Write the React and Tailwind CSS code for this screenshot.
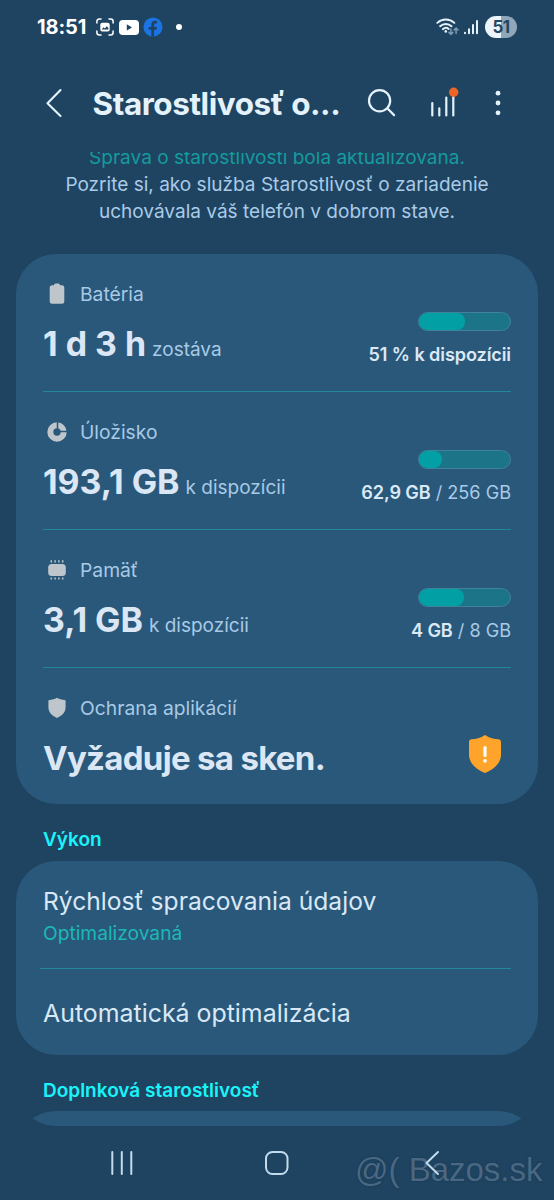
function StatusBar() {
    return (
        <div className="flex h-[54px] shrink-0 items-center justify-between pl-[37px] pr-[37px] text-white">
            <div className="flex items-center">
                <span className="w-[50px] text-[20px] font-bold leading-6 tracking-[-0.1px]">18:51</span>
                <svg width="18" height="18" viewBox="0 0 18 18" className="ml-[9px]" fill="none" stroke="#fff" strokeWidth="1.5" strokeLinecap="round">
                    <path d="M.9 5V3.4A2.5 2.5 0 0 1 3.4.9H5M13 .9h1.6a2.5 2.5 0 0 1 2.5 2.5V5M17.1 13v1.6a2.5 2.5 0 0 1-2.5 2.5H13M5 17.1H3.4A2.5 2.5 0 0 1 .9 14.6V13" />
                    <rect x="4.300" y="4.800" width="9.400" height="8.800" rx="2" fill="#fff" stroke="none" />
                    <path d="M5.600 11.600l2-2.300 1.200 1.200 2-2.200 1.600 1.700v1.600z" fill="#1f4461" stroke="none" />
                </svg>
                <svg width="20" height="15" viewBox="0 0 20 15" className="ml-[5px]">
                    <rect width="20" height="15" rx="3.8" fill="#fff" />
                    <path d="M7.800 4.300v6.200l5.200-3.100z" fill="#1f4461" />
                </svg>
                <svg width="20" height="20" viewBox="0 0 20 20" className="ml-[4px]">
                    <circle cx="10" cy="10" r="9.500" fill="#1c74e4" />
                    <path d="M8.300 19.400v-6.600H5.600v-2.900h2.700V7.800c0-2.800 1.500-4 3.800-4 .8 0 1.400.1 1.900.2v2.500h-1.300c-1.200 0-1.600.6-1.600 1.500v1.900h2.800l-.5 2.900h-2.300v6.600z" fill="#1f4461" />
                </svg>
                <span className="ml-[12.500px] h-[6px] w-[6px] rounded-full bg-white" />
            </div>
            <div className="flex items-center">
                <svg width="24" height="18" viewBox="0 0 24 18" fill="none" strokeLinecap="round">
                    <g stroke="#e6f2fa" strokeWidth="1.900">
                        <path d="M1.300 4.900a12.500 12.500 0 0 1 17 0M4.100 8.200a8.300 8.300 0 0 1 11.400 0M6.900 11.200a4.400 4.400 0 0 1 5.800-.2" />
                    </g>
                    <circle cx="9.800" cy="13.400" r="1.300" fill="#e6f2fa" />
                    <path d="M14.900 11v5.400m-2-2l2 2 2-2M20.100 15.400v-5.400m-2 2l2-2 2 2" stroke="#7d9bb3" strokeWidth="1.500" />
                </svg>
                <svg width="16" height="16" viewBox="0 0 16 16" className="ml-[2.500px]" stroke="#e6f2fa" strokeWidth="2" strokeLinecap="round">
                    <path d="M2 13.800v.4M6 10.200v4M10 6v8.200M14 2v12.200" />
                </svg>
                <span className="ml-[6.500px] flex h-[22px] w-[32px] items-center justify-center rounded-full bg-linear-to-r from-[#ebf5fb] from-50% to-[#8fa7b9] to-50% text-[17px] font-bold leading-none tracking-[-0.7px] text-[#24475f]">
                    51
                </span>
            </div>
        </div>
    );
}

function Header() {
    return (
        <header className="flex h-[98px] shrink-0 items-center pl-[44.500px] text-[#e3f2fb]">
            <svg width="18" height="30" viewBox="0 0 18 30" fill="none" stroke="currentColor" strokeWidth="2.100" strokeLinecap="round" strokeLinejoin="round">
                <path d="M15.500 2L2.500 15.300l13 12.700" />
            </svg>
            <h1 className="ml-[30px] mt-[2px] w-[260px] whitespace-nowrap text-[31.500px] font-bold leading-10 tracking-[-0.45px]">
                Starostlivosť o...
            </h1>
            <svg width="30" height="30" viewBox="0 0 30 30" className="ml-[14.500px]" fill="none" stroke="currentColor" strokeWidth="2.200" strokeLinecap="round">
                <circle cx="12.600" cy="12.800" r="10.600" />
                <path d="M20.500 20.500l6.600 6.600" />
            </svg>
            <svg width="32" height="32" viewBox="0 0 32 32" className="ml-[32px] -mt-[4px]" stroke="currentColor" strokeWidth="2.200" strokeLinecap="round">
                <path d="M3.300 18v12.500M10.300 23.300v7.200M17.300 12.500v18M24.300 9v21.500" />
                <circle cx="24.700" cy="7.300" r="4.700" fill="#ef6425" stroke="none" />
            </svg>
            <svg width="6" height="26" viewBox="0 0 6 26" className="ml-[34px]" fill="currentColor">
                <circle cx="3" cy="3.200" r="2.400" />
                <circle cx="3" cy="13" r="2.400" />
                <circle cx="3" cy="22.800" r="2.400" />
            </svg>
        </header>
    );
}

const BatteryIcon = () => (
    <svg width="26" height="22" viewBox="0 0 26 22" fill="#bec6cb">
        <path d="M10 2.200Q10 .5 11.500.5h3q1.500 0 1.500 1.700h1.800q2.500 0 2.500 2.500v13.600q0 2.500-2.500 2.500h-9.600q-2.500 0-2.500-2.500V4.700q0-2.500 2.500-2.500z" />
    </svg>
);

const StorageIcon = () => (
    <svg width="26" height="22" viewBox="0 0 26 22" fill="none">
        <circle cx="13" cy="11" r="6.700" stroke="#bec6cb" strokeWidth="6" />
        <path d="M13.500 0v8M16 10.500h8" stroke="#2a587a" strokeWidth="1.500" />
    </svg>
);

const MemoryIcon = () => (
    <svg width="26" height="22" viewBox="0 0 26 22" fill="#bec6cb">
        <rect x="4.200" y="5" width="17.600" height="12" rx="3.500" />
        <path d="M7.300 1.200v2.200M11.100 1.200v2.200M14.900 1.200v2.200M18.700 1.200v2.200M7.300 18.400v2.200M11.100 18.400v2.200M14.900 18.400v2.200M18.700 18.400v2.200" stroke="#bec6cb" strokeWidth="1.500" />
    </svg>
);

const ShieldIcon = () => (
    <svg width="26" height="22" viewBox="0 0 26 22" fill="#bec6cb">
        <path d="M13 .8c2.500 1.500 4.900 2 7.500 2.100q1.100.1 1.100 1.200v6.200c0 5-3.600 8.500-8.600 10.700-5-2.200-8.600-5.700-8.600-10.700V4.100q0-1.100 1.100-1.200C8.100 2.800 10.500 2.300 13 .8z" />
    </svg>
);

const stats = [
    { label: "Batéria", icon: BatteryIcon, value: "1 d 3 h", unit: "zostáva", fill: 51, used: "51 % k dispozícii" },
    { label: "Úložisko", icon: StorageIcon, value: "193,1 GB", unit: "k dispozícii", fill: 25, used: "62,9 GB", total: "256 GB" },
    { label: "Pamäť", icon: MemoryIcon, value: "3,1 GB", unit: "k dispozícii", fill: 49, used: "4 GB", total: "8 GB" },
];

function Label({ icon: Icon, children }) {
    return (
        <div className="flex h-7 items-center gap-[10px] pl-[1px] text-[19.300px] text-[#a8cae6]">
            <Icon />
            <span className="leading-7">{children}</span>
        </div>
    );
}

function StatRow({ stat }) {
    return (
        <div className="flex h-[138px] justify-between border-b border-[#22879c]">
            <div className="pt-[26px]">
                <Label icon={stat.icon}>{stat.label}</Label>
                <div className="mt-[16px] flex items-baseline gap-[6px] whitespace-nowrap leading-10">
                    <span className="text-[33.900px] font-bold text-[#dbe7f4]">{stat.value}</span>
                    <span className="text-[19px] text-[#a8cae6]">{stat.unit}</span>
                </div>
            </div>
            <div className="flex flex-col items-end pt-[58px]">
                <div className="h-[19px] w-[93px] overflow-hidden rounded-full border border-[#3f8299] bg-[#1b7488]">
                    <div className="h-full rounded-r-[8px] bg-[#02a0a4]" style={{ width: `${stat.fill}%` }} />
                </div>
                <div className="mt-[11px] whitespace-nowrap text-[18.100px] leading-6 text-[#a8cae6]">
                    <span className="font-semibold tracking-[-0.1px] text-[#dbe9f7]">{stat.used}</span>
                    {stat.total && <span> / {stat.total}</span>}
                </div>
            </div>
        </div>
    );
}

function SectionTitle({ children }) {
    return <h2 className="pl-[27px] text-[19px] font-semibold leading-6 text-[#19f4fb]">{children}</h2>;
}

function NavBar() {
    return (
        <nav className="relative flex h-[74px] shrink-0 items-center text-[#c3dbec]">
            <span className="absolute left-[355px] top-[24px] whitespace-nowrap font-['Liberation_Sans',sans-serif] text-[33px] leading-10 text-[#4a6883] [text-shadow:0_0_2px_#16344d]">
                @( Bazos.sk
            </span>
            <svg width="24" height="28" viewBox="0 0 24 28" className="ml-[110px]" stroke="currentColor" strokeWidth="2" strokeLinecap="round">
                <path d="M2.300 3v22M11.800 3v22M21.300 3v22" />
            </svg>
            <svg width="26" height="26" viewBox="0 0 26 26" className="ml-[130px]" fill="none" stroke="currentColor" strokeWidth="2">
                <rect x="2" y="2" width="21.500" height="22" rx="6.500" />
            </svg>
            <svg width="16" height="28" viewBox="0 0 16 28" className="relative ml-[134px]" fill="none" stroke="currentColor" strokeWidth="2" strokeLinecap="round" strokeLinejoin="round">
                <path d="M14 3L2.500 14 14 25" />
            </svg>
        </nav>
    );
}

export default function App() {
    return (
        <div className="flex h-[1200px] w-[554px] flex-col overflow-hidden bg-[#1f4461] font-['Inter',sans-serif]">
            <StatusBar />
            <Header />

            <main className="mx-4 h-[974px] shrink-0 overflow-hidden rounded-b-[40px]">
                <p className="-mt-[8px] text-center text-[19.050px] leading-[27px] text-[#a9cbe8]">
                    <span className="text-[#159a9d]">Správa o starostlivosti bola aktualizovaná.</span>
                    <br />
                    Pozrite si, ako služba Starostlivosť o zariadenie
                    <br />
                    uchovávala váš telefón v dobrom stave.
                </p>

                <section className="mt-[29px] h-[550px] rounded-[40px] bg-[#2a587a] pl-[27px] pr-[27px]">
                    {stats.map((s) => (
                        <StatRow key={s.label} stat={s} />
                    ))}
                    <div className="flex justify-between">
                        <div className="pt-[26px]">
                            <Label icon={ShieldIcon}>Ochrana aplikácií</Label>
                            <div className="mt-[16px] whitespace-nowrap text-[33px] font-bold leading-10 tracking-[-0.7px] text-[#dbe7f4]">
                                Vyžaduje sa sken.
                            </div>
                        </div>
                        <svg width="34" height="40" viewBox="0 0 34 40" className="mr-[9px] mt-[66px]">
                            <path d="M17 1c4.600 3.200 9 4 13.600 4.300q2.400.2 2.400 2.600v12.600c0 9-7.500 14.800-16 18.500C8.500 35.300 1 29.500 1 20.500V7.900q0-2.400 2.400-2.600C8 5 12.400 4.200 17 1z" fill="#ffa42b" />
                            <path d="M17 13.500v8" stroke="#fff" strokeWidth="3.200" strokeLinecap="round" />
                            <circle cx="17" cy="26.800" r="1.900" fill="#fff" />
                        </svg>
                    </div>
                </section>

                <div className="flex h-[57px] items-center pt-[14px]">
                    <SectionTitle>Výkon</SectionTitle>
                </div>
                <section className="h-[194px] rounded-[40px] bg-[#2a587a] pl-[24px] pr-[27px] pt-[24px] text-[#d8e8f6]">
                    <div className="h-[84px] border-b border-[#22879c] pl-[3px]">
                        <div className="text-[24.600px] leading-8">Rýchlosť spracovania údajov</div>
                        <div className="text-[19.200px] leading-[32px] text-[#1cb8b8]">Optimalizovaná</div>
                    </div>
                    <div className="pl-[3px] pt-[28px] text-[24.900px] leading-8">Automatická optimalizácia</div>
                </section>

                <div className="flex h-[56px] items-center pt-[16px]">
                    <SectionTitle>Doplnková starostlivosť</SectionTitle>
                </div>
                <section className="h-[140px] rounded-[40px] bg-[#2a587a]" />
            </main>

            <NavBar />
        </div>
    );
}
